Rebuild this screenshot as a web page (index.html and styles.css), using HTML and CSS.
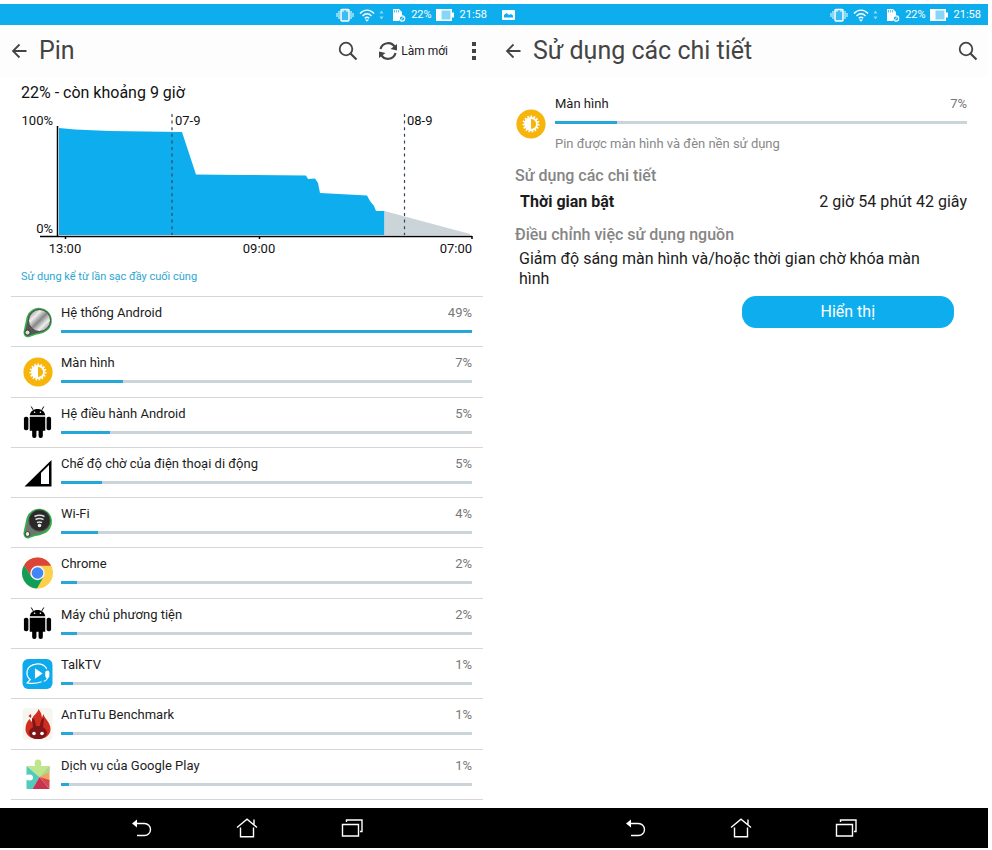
FILE: index.html
```html
<!DOCTYPE html>
<html lang="vi">
<head>
    <meta charset="UTF-8">
    <meta name="viewport" content="width=device-width, initial-scale=1.0">
    <title>Pin</title>
    <link rel="stylesheet" href="styles.css">
</head>
<body>
    <!-- shared icons -->
    <svg class="sprite" width="0" height="0">
        <symbol id="vibrate" viewBox="0 0 18 14">
            <path d="M1 5v4M3 3v8M15 3v8M17 5v4" fill="none" stroke="#fff" stroke-width="1"/>
            <rect x="5" y="1.500" width="8" height="11.500" rx="1" fill="#3dbcf0" stroke="#fff" stroke-width="1.500"/>
            <path d="M6 3h2M10 3h2" stroke="#fff"/>
        </symbol>
        <symbol id="wifi" viewBox="0 0 16 14">
            <path d="M1 5.500c4-4.500 10-4.500 14 0M3.500 8c3-3 6-3 9 0M5.800 10.300c1.500-1.500 3-1.500 4.400 0" fill="none" stroke="#fff" stroke-width="1.400"/>
            <path d="M6 11.500h4L8 13.800z" fill="#fff"/>
        </symbol>
        <symbol id="updown" viewBox="0 0 5 14">
            <path d="M.5 5.500l2-3 2 3zM.5 8.500l2 3 2-3z" fill="#8bd8f7"/>
        </symbol>
        <symbol id="sdcard" viewBox="0 0 14 14">
            <path d="M1 1h6l3 3v4l-3 2v3H1z" fill="#fff"/>
            <path d="M2.500 2v2.500M4.500 2v2.500M6.500 2v2.500" stroke="#5cc8f2"/>
            <circle cx="10" cy="10.500" r="2.700" fill="#0eaeee" stroke="#fff" stroke-width="1.200"/>
            <path d="M8.500 12l3-3" stroke="#fff"/>
        </symbol>
        <symbol id="battery" viewBox="0 0 18 12">
            <path d="M0 0h16v3.500h2v5h-2V12H0z" fill="#fff"/>
            <path d="M5.500 1.500h9v9h-9z" fill="#86d6f7"/>
        </symbol>
        <symbol id="back" viewBox="0 0 16 16">
            <path d="M8.500 1.500L2 8l6.500 6.500M2 8h13.500" fill="none" stroke="#444" stroke-width="1.800"/>
        </symbol>
        <symbol id="search" viewBox="0 0 20 20">
            <circle cx="8" cy="8" r="6.300" fill="none" stroke="#444" stroke-width="1.800"/>
            <path d="M12.500 12.500l6 6" stroke="#444" stroke-width="2.200"/>
        </symbol>
        <symbol id="refresh" viewBox="0 0 20 20">
            <path d="M2.500 8A7.800 7.800 0 0 1 17 6.500M17.500 12A7.800 7.800 0 0 1 3 13.500" fill="none" stroke="#444" stroke-width="2.200"/>
            <path d="M19 3v6.500l-6.500-1.500zM1 17v-6.500l6.500 1.500z" fill="#444"/>
        </symbol>
        <symbol id="more" viewBox="0 0 4 18">
            <path d="M0 0h4v4H0zM0 7h4v4H0zM0 14h4v4H0z" fill="#444"/>
        </symbol>
        <symbol id="nav-back" viewBox="0 0 22 20">
            <path d="M5 5.500h8.500a6 6 0 0 1 0 12H6" fill="none" stroke="#fff" stroke-width="1.400"/>
            <path d="M1 5.500l5-4v8z" fill="#fff"/>
        </symbol>
        <symbol id="nav-home" viewBox="0 0 22 20">
            <path d="M1 9.500L11 1.200l10 8.300M4.500 9.500v9.300h13V9.500M18 6.500V1.500" fill="none" stroke="#fff" stroke-width="1.400"/>
        </symbol>
        <symbol id="nav-recent" viewBox="0 0 22 20">
            <path d="M1.500 6.500h16v11.500h-16zM5.500 4V2h15.500v11.500h-2" fill="none" stroke="#fff" stroke-width="1.400"/>
        </symbol>
        <symbol id="screen" viewBox="0 0 31 32">
            <circle cx="16" cy="16" r="14.600" fill="#f7b50c"/>
            <circle cx="16" cy="16" r="7.500" fill="none" stroke="#fff" stroke-width="2" stroke-dasharray="1.600 1.540"/>
            <circle cx="16" cy="16" r="6" fill="#f7b50c" stroke="#fff" stroke-width="1.800"/>
            <path d="M16 10a6 6 0 0 0 0 12z" fill="#fff"/>
        </symbol>
        <symbol id="android" viewBox="0 1 28 33">
            <path d="M6 10.500C6.500 6.500 10 4 14 4s7.500 2.500 8 6.500zM6 12h16v14.500H6z"/>
            <path d="M9.500 5L7.500 1.500M18.500 5l2-3.500" stroke="#000"/>
            <rect x="0" y="12" width="4.600" height="14" rx="2"/>
            <rect x="23.400" y="12" width="4.600" height="14" rx="2"/>
            <rect x="8.500" y="24" width="4.400" height="10" rx="2"/>
            <rect x="15.100" y="24" width="4.400" height="10" rx="2"/>
            <circle cx="11" cy="7.500" r=".8" fill="#fff"/>
            <circle cx="17" cy="7.500" r=".8" fill="#fff"/>
        </symbol>
    </svg>

    <div class="board">
        <section class="phone">
            <div class="status-bar">
                <div class="status-icons">
                    <svg class="icon-vibrate"><use href="#vibrate"/></svg>
                    <svg class="icon-wifi"><use href="#wifi"/></svg>
                    <svg class="icon-updown"><use href="#updown"/></svg>
                    <svg class="icon-sdcard"><use href="#sdcard"/></svg>
                    <span class="status-level">22%</span>
                    <svg class="icon-battery"><use href="#battery"/></svg>
                    <span class="status-time">21:58</span>
                </div>
            </div>
            <header class="app-bar">
                <button class="icon-button" aria-label="Quay lại"><svg class="icon-back"><use href="#back"/></svg></button>
                <h1 class="app-title">Pin</h1>
                <button class="icon-button" aria-label="Tìm kiếm"><svg class="icon-search"><use href="#search"/></svg></button>
                <button class="icon-button refresh-button"><svg class="icon-search"><use href="#refresh"/></svg>Làm mới</button>
                <button class="icon-button more-button" aria-label="Thêm"><svg class="icon-more"><use href="#more"/></svg></button>
            </header>
            <main class="battery-page">
                <h2 class="battery-title">22% - còn khoảng 9 giờ</h2>
                <svg class="battery-chart" viewBox="0 0 494 150">
                    <path d="M59 20L75 21.500 110 23 182 24 196 66.500 240 67 306 67.500 308 71 315 70.500 318 75 320 85 367 87.500 370 93 374 98 376 103 384.500 103V127H59z" fill="#0eaeee"/>
                    <path d="M384.500 103L470 126V127H384.500z" fill="#cbd4d8"/>
                    <path d="M172 6v121M404.500 6v121" stroke="#345" stroke-width="1.200" stroke-dasharray="3 3.600"/>
                    <path d="M57.500 18v110M40 128.500h432M65.500 128v3M259.500 128v3M472 128v3" fill="none" stroke="#000" stroke-width="1.500"/>
                    <text x="53" y="17" text-anchor="end">100%</text>
                    <text x="53" y="125" text-anchor="end">0%</text>
                    <text x="175" y="17">07-9</text>
                    <text x="407" y="17">08-9</text>
                    <text x="65" y="145" text-anchor="middle">13:00</text>
                    <text x="259" y="145" text-anchor="middle">09:00</text>
                    <text x="472" y="145" text-anchor="end">07:00</text>
                </svg>
                <p class="battery-note">Sử dụng kể từ lần sạc đầy cuối cùng</p>
                <ul class="usage-list">
                    <li class="usage-item">
                        <svg class="usage-icon" viewBox="0 0 30 32">
                            <defs>
                                <linearGradient id="metal" x1="0" y1="0" x2="1" y2="1">
                                    <stop offset="0" stop-color="#666"/>
                                    <stop offset=".3" stop-color="#eee"/>
                                    <stop offset=".5" stop-color="#888"/>
                                    <stop offset=".7" stop-color="#eee"/>
                                    <stop offset="1" stop-color="#555"/>
                                </linearGradient>
                            </defs>
                            <path d="M2 25L5 11C9-1 27 0 28.500 13.500 29 24 20 27 13 28L6 30.500C3 31 1 28 2 25z" fill="#555" stroke="#35ad47" stroke-width="1.600"/>
                            <circle cx="17" cy="14.500" r="11" fill="url(#metal)" stroke="#444"/>
                            <circle cx="5" cy="26.500" r="2.600" fill="#ddd" stroke="#333"/>
                        </svg>
                        <div class="usage-body">
                            <div class="usage-text"><span>Hệ thống Android</span><span class="usage-percent">49%</span></div>
                            <div class="bar"><div class="bar-fill" style="width: 100%"></div></div>
                        </div>
                    </li>
                    <li class="usage-item">
                        <svg class="usage-icon"><use href="#screen"/></svg>
                        <div class="usage-body">
                            <div class="usage-text"><span>Màn hình</span><span class="usage-percent">7%</span></div>
                            <div class="bar"><div class="bar-fill" style="width: 15%"></div></div>
                        </div>
                    </li>
                    <li class="usage-item">
                        <svg class="usage-icon"><use href="#android"/></svg>
                        <div class="usage-body">
                            <div class="usage-text"><span>Hệ điều hành Android</span><span class="usage-percent">5%</span></div>
                            <div class="bar"><div class="bar-fill" style="width: 12%"></div></div>
                        </div>
                    </li>
                    <li class="usage-item">
                        <svg class="usage-icon" viewBox="0 0 30 32">
                            <path d="M2 29.500L29 3v26.500z"/>
                            <path d="M18.500 27V16L26.500 8v19z" fill="#fff"/>
                        </svg>
                        <div class="usage-body">
                            <div class="usage-text"><span>Chế độ chờ của điện thoại di động</span><span class="usage-percent">5%</span></div>
                            <div class="bar"><div class="bar-fill" style="width: 10%"></div></div>
                        </div>
                    </li>
                    <li class="usage-item">
                        <svg class="usage-icon" viewBox="0 0 30 32">
                            <path d="M2 25L5 11C9-1 27 0 28.500 13.500 29 24 20 27 13 28L6 30.500C3 31 1 28 2 25z" fill="#6b756c" stroke="#35ad47" stroke-width="1.800"/>
                            <circle cx="17" cy="13.500" r="10.500" fill="#292929" stroke="#444"/>
                            <path d="M12 9.500q5-2.500 10 0M13 12.500q4-2 8 0M14.500 15.500q2.500-1 5 0" fill="none" stroke="#ddd" stroke-width="1.400"/>
                            <circle cx="17" cy="18.500" r="1.800" fill="#eee"/>
                            <circle cx="5" cy="27" r="2.400" fill="#eee" stroke="#333"/>
                        </svg>
                        <div class="usage-body">
                            <div class="usage-text"><span>Wi-Fi</span><span class="usage-percent">4%</span></div>
                            <div class="bar"><div class="bar-fill" style="width: 9%"></div></div>
                        </div>
                    </li>
                    <li class="usage-item">
                        <svg class="usage-icon" viewBox="0 0 30 30">
                            <circle cx="15" cy="15" r="15" fill="#fdd04b"/>
                            <path d="M2 7.500A15 15 0 0 1 28.200 8H15L9 18.500z" fill="#db4437"/>
                            <path d="M2 7.500A15 15 0 0 0 14.500 30L21 18.500 15 22 9 18.500z" fill="#0f9d58"/>
                            <circle cx="15" cy="15" r="7" fill="#f4f4f4"/>
                            <circle cx="15" cy="15" r="5.600" fill="#4285f4"/>
                        </svg>
                        <div class="usage-body">
                            <div class="usage-text"><span>Chrome</span><span class="usage-percent">2%</span></div>
                            <div class="bar"><div class="bar-fill" style="width: 4%"></div></div>
                        </div>
                    </li>
                    <li class="usage-item">
                        <svg class="usage-icon"><use href="#android"/></svg>
                        <div class="usage-body">
                            <div class="usage-text"><span>Máy chủ phương tiện</span><span class="usage-percent">2%</span></div>
                            <div class="bar"><div class="bar-fill" style="width: 4%"></div></div>
                        </div>
                    </li>
                    <li class="usage-item">
                        <svg class="usage-icon" viewBox="0 0 30 30">
                            <rect x=".5" y=".5" width="29" height="29" rx="5.500" fill="#0eaaec"/>
                            <path d="M24 10C20 3 7 4 5 12c-.7 4 1 7 3 8.500L5 23.500c5 1 11 0 14-1" fill="none" stroke="#fff" stroke-width="1.200"/>
                            <path d="M12.500 9.500l7.500 5-7.500 5z" fill="#fff"/>
                            <rect x="22.500" y="11.500" width="4" height="7.500" rx="2" fill="#fff"/>
                            <path d="M25 18q-1 3.500-4 4" fill="none" stroke="#fff"/>
                        </svg>
                        <div class="usage-body">
                            <div class="usage-text"><span>TalkTV</span><span class="usage-percent">1%</span></div>
                            <div class="bar"><div class="bar-fill" style="width: 3%"></div></div>
                        </div>
                    </li>
                    <li class="usage-item">
                        <svg class="usage-icon" viewBox="0 0 30 32">
                            <rect width="30" height="32" rx="4" fill="#f7f5ef"/>
                            <path d="M10 11c0-4 5-5 6-10 3 4 3 6 3.500 8.500L21 6c1 5 7 8 7 15 0 6-5 10-12.500 10S3 27 3 21c0-5 2-8 4-10l2 3z" fill="#cf2d20"/>
                            <path d="M6.500 25c0-4 3-4.500 4-6L9.500 10c2.500 0 3.500 4 4 8h4c.5-4 1.500-8 4-8l-1 9c2 2 4 2.500 4 6-1 4-4 6-9 6s-8-2-9-6z" fill="#7d1519"/>
                            <circle cx="11.500" cy="25.500" r="1.800" fill="#fff"/>
                            <circle cx="19.500" cy="25.500" r="1.800" fill="#fff"/>
                            <path d="M6 8l2-2 1 2-1 2z" fill="#cf2d20"/>
                        </svg>
                        <div class="usage-body">
                            <div class="usage-text"><span>AnTuTu Benchmark</span><span class="usage-percent">1%</span></div>
                            <div class="bar"><div class="bar-fill" style="width: 3%"></div></div>
                        </div>
                    </li>
                    <li class="usage-item">
                        <svg class="usage-icon" viewBox="0 0 30 32">
                            <path d="M4 8h8.500C11.500 4 12.500 1.500 15.500 1.500S19.500 4 18.500 8H27L17 19z" fill="#bfe68d"/>
                            <path d="M4 8l13 11L10 31H4v-9c5 1 6.500 0 6.500-2.500S8 16 4 17z" fill="#50cbbc"/>
                            <path d="M27 8v16L17 19z" fill="#f4a263"/>
                            <path d="M27 8v6l-10 5z" fill="#a5dc8a"/>
                            <path d="M10 31l7-12 10 12z" fill="#c73350"/>
                            <path d="M17 19l10 3v9z" fill="#d44a4c"/>
                        </svg>
                        <div class="usage-body">
                            <div class="usage-text"><span>Dịch vụ của Google Play</span><span class="usage-percent">1%</span></div>
                            <div class="bar"><div class="bar-fill" style="width: 2%"></div></div>
                        </div>
                    </li>
                </ul>
            </main>
            <nav class="nav-bar">
                <button class="nav-button" aria-label="Quay lại"><svg class="icon-nav"><use href="#nav-back"/></svg></button>
                <button class="nav-button" aria-label="Màn hình chính"><svg class="icon-nav"><use href="#nav-home"/></svg></button>
                <button class="nav-button" aria-label="Gần đây"><svg class="icon-nav"><use href="#nav-recent"/></svg></button>
            </nav>
        </section>

        <section class="phone">
            <div class="status-bar">
                <svg class="icon-picture" viewBox="0 0 13 10">
                    <rect width="13" height="10" rx="1" fill="#fff"/>
                    <path d="M2 7.500V5l2.500-2L7 5l2-1 2 1.500v2z" fill="#0eaeee"/>
                </svg>
                <div class="status-icons">
                    <svg class="icon-vibrate"><use href="#vibrate"/></svg>
                    <svg class="icon-wifi"><use href="#wifi"/></svg>
                    <svg class="icon-updown"><use href="#updown"/></svg>
                    <svg class="icon-sdcard"><use href="#sdcard"/></svg>
                    <span class="status-level">22%</span>
                    <svg class="icon-battery"><use href="#battery"/></svg>
                    <span class="status-time">21:58</span>
                </div>
            </div>
            <header class="app-bar">
                <button class="icon-button" aria-label="Quay lại"><svg class="icon-back"><use href="#back"/></svg></button>
                <h1 class="app-title">Sử dụng các chi tiết</h1>
                <button class="icon-button" aria-label="Tìm kiếm"><svg class="icon-search"><use href="#search"/></svg></button>
            </header>
            <main class="detail-page">
                <div class="detail-head">
                    <svg class="usage-icon"><use href="#screen"/></svg>
                    <div class="usage-body">
                        <div class="usage-text"><span>Màn hình</span><span class="usage-percent">7%</span></div>
                        <div class="bar"><div class="bar-fill" style="width: 15%"></div></div>
                        <p class="detail-note">Pin được màn hình và đèn nền sử dụng</p>
                    </div>
                </div>
                <h2 class="detail-title">Sử dụng các chi tiết</h2>
                <dl class="detail-row">
                    <dt>Thời gian bật</dt>
                    <dd>2 giờ 54 phút 42 giây</dd>
                </dl>
                <h2 class="detail-title">Điều chỉnh việc sử dụng nguồn</h2>
                <p class="detail-advice">Giảm độ sáng màn hình và/hoặc thời gian chờ khóa màn hình</p>
                <button class="display-button">Hiển thị</button>
            </main>
            <nav class="nav-bar">
                <button class="nav-button" aria-label="Quay lại"><svg class="icon-nav"><use href="#nav-back"/></svg></button>
                <button class="nav-button" aria-label="Màn hình chính"><svg class="icon-nav"><use href="#nav-home"/></svg></button>
                <button class="nav-button" aria-label="Gần đây"><svg class="icon-nav"><use href="#nav-recent"/></svg></button>
            </nav>
        </section>
    </div>
</body>
</html>
```
FILE: styles.css
```css
* {
    box-sizing: border-box;
}
body {
    margin: 0;
    background-color: #fff;
    color: #1c1c1c;
    font-family: Roboto, "Noto Sans", sans-serif;
    font-size: 13px;
}
h1, h2, p, ul, dl, dd {
    margin: 0;
    padding: 0;
}
button {
    border: none;
    padding: 0;
    background: none;
    color: inherit;
    font: inherit;
    cursor: pointer;
}
svg {
    display: block;
    flex: none;
}
.sprite {
    position: absolute;
}
.board {
    display: flex;
    min-height: 100vh;
    padding: 4px 4px 2px 0;
}
.phone {
    flex: 1;
    min-width: 0;
    display: flex;
    flex-direction: column;
}

/* status bar */
.status-bar {
    display: flex;
    align-items: center;
    height: 21px;
    padding: 0 7px 0 8px;
    background-color: #0eaeee;
    color: #fff;
    font-size: 11px;
}
.status-icons {
    display: flex;
    align-items: center;
    margin-left: auto;
}
.icon-picture {
    width: 13px;
    height: 10px;
}
.icon-vibrate {
    width: 18px;
    height: 14px;
    margin-right: 5px;
}
.icon-wifi {
    width: 16px;
    height: 14px;
    margin-right: 4px;
}
.icon-updown {
    width: 5px;
    height: 14px;
    margin-right: 8px;
}
.icon-sdcard {
    width: 14px;
    height: 14px;
    margin-right: 5px;
}
.icon-battery {
    width: 18px;
    height: 12px;
    margin: 0 6px 0 4px;
}

/* title bar */
.app-bar {
    display: flex;
    align-items: center;
    height: 52px;
    padding: 0 10px 0 11px;
    background-color: #fdfdfd;
    color: #444;
}
.app-title {
    flex: 1;
    padding-left: 12px;
    font-size: 25px;
    font-weight: 400;
    line-height: 32px;
}
.icon-button {
    display: flex;
    align-items: center;
}
.refresh-button {
    gap: 3px;
    margin-left: 20px;
    color: #222;
    font-size: 12px;
}
.more-button {
    margin: 0 8px 0 24px;
}
.icon-back {
    width: 16px;
    height: 16px;
}
.icon-search {
    width: 20px;
    height: 20px;
}
.icon-more {
    width: 4px;
    height: 18px;
}

/* battery page */
.battery-page {
    flex: 1;
    display: flex;
    flex-direction: column;
    padding-bottom: 8px;
}
.battery-title {
    padding: 6px 21px 5px;
    color: #111;
    font-size: 16px;
    font-weight: 400;
    line-height: 20px;
}
.battery-chart {
    width: 100%;
    fill: #111;
    font-size: 13px;
}
.battery-note {
    padding: 11px 21px;
    color: #2ba6d3;
    font-size: 11px;
    line-height: 16px;
}
.usage-list {
    flex: 1;
    display: flex;
    flex-direction: column;
    margin: 0 11px;
    border-bottom: 1px solid #d6d6d6;
    list-style: none;
}
.usage-item {
    flex: 1;
    display: flex;
    align-items: center;
    gap: 8px;
    padding: 0 11px;
    border-top: 1px solid #d6d6d6;
}
.usage-icon {
    width: 31px;
    height: 32px;
}
.usage-body {
    flex: 1;
}
.usage-item .usage-body {
    align-self: flex-start;
    padding-top: 7px;
}
.usage-text {
    display: flex;
    justify-content: space-between;
    line-height: 18px;
}
.usage-percent {
    color: #777;
}
.bar {
    height: 3px;
    margin-top: 8px;
    background-color: #cbd4d8;
}
.bar-fill {
    height: 3px;
    background-color: #26a7da;
}

/* detail page */
.detail-page {
    flex: 1;
    display: flex;
    flex-direction: column;
    padding: 18px 21px 0;
    font-size: 16px;
    line-height: 20px;
}
.detail-head {
    display: flex;
    align-items: center;
    gap: 9px;
    font-size: 13px;
}
.detail-note {
    padding-top: 11px;
    color: #888;
    line-height: 18px;
}
.detail-title {
    margin-top: 13px;
    color: #858585;
    font-size: 16px;
    font-weight: 500;
}
.detail-row {
    display: flex;
    justify-content: space-between;
    margin-top: 6px;
    padding-left: 5px;
}
.detail-row dt {
    font-weight: 700;
}
.detail-advice {
    margin-top: 4px;
    padding: 0 13px 0 4px;
}
.display-button {
    align-self: flex-end;
    width: 47%;
    height: 32px;
    margin: 8px 13px 0 0;
    border-radius: 14px;
    background-color: #0eaeee;
    color: #fff;
}
.detail-page .display-button {
    margin-top: 7px;
}

/* system buttons */
.nav-bar {
    display: flex;
    justify-content: center;
    height: 40px;
    background-color: #000;
}
.nav-button {
    display: flex;
    align-items: center;
    justify-content: center;
    width: 105px;
}
.icon-nav {
    width: 22px;
    height: 20px;
}
```
